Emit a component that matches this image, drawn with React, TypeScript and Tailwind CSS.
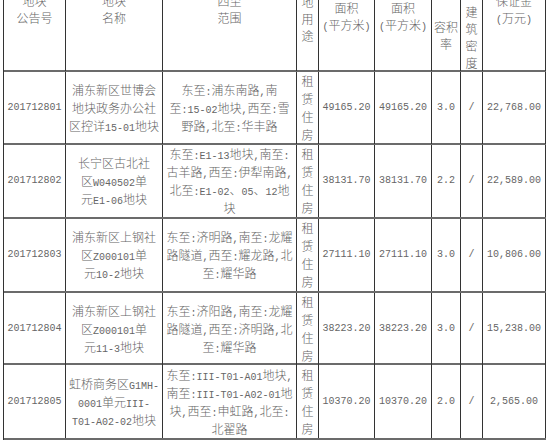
import React from "react";

const MONO = "font-['Liberation_Mono','Noto_Sans_CJK_SC',monospace] text-[10px] leading-none";

function T({ s }: { s: string }) {
  const parts = s.split(/([\x20-\x7E]+)/).filter((p) => p.length > 0);
  return (
    <>
      {parts.map((p, i) =>
        /^[\x20-\x7E]+$/.test(p) ? (
          <span key={i} className={MONO}>
            {p}
          </span>
        ) : (
          <span key={i}>{p}</span>
        )
      )}
    </>
  );
}

const COLS =
  "grid grid-cols-[62px_97px_134px_22px_56px_57px_29px_22px_63px]";

type Row = {
  id: string;
  name: string[];
  range: string[];
  a1: string;
  a2: string;
  far: string;
  fee: string;
  h: string;
};

const rows: Row[] = [
  {
    id: "201712801",
    name: ["浦东新区世博会", "地块政务办公社", "区控详15-01地块"],
    range: ["东至:浦东南路,南", "至:15-02地块,西至:雪", "野路,北至:华丰路"],
    a1: "49165.20",
    a2: "49165.20",
    far: "3.0",
    fee: "22,768.00",
    h: "h-[73px]",
  },
  {
    id: "201712802",
    name: ["长宁区古北社", "区W040502单", "元E1-06地块"],
    range: ["东至:E1-13地块,南至:", "古羊路,西至:伊犁南路,", "北至:E1-02、05、12地", "块"],
    a1: "38131.70",
    a2: "38131.70",
    far: "2.2",
    fee: "22,589.00",
    h: "h-[74px]",
  },
  {
    id: "201712803",
    name: ["浦东新区上钢社", "区Z000101单", "元10-2地块"],
    range: ["东至:济明路,南至:龙耀", "路隧道,西至:耀龙路,北", "至:耀华路"],
    a1: "27111.10",
    a2: "27111.10",
    far: "3.0",
    fee: "10,806.00",
    h: "h-[74px]",
  },
  {
    id: "201712804",
    name: ["浦东新区上钢社", "区Z000101单", "元11-3地块"],
    range: ["东至:济阳路,南至:龙耀", "路隧道,西至:济明路,北", "至:耀华路"],
    a1: "38223.20",
    a2: "38223.20",
    far: "3.0",
    fee: "15,238.00",
    h: "h-[72px]",
  },
  {
    id: "201712805",
    name: ["虹桥商务区G1MH-", "0001单元III-", "T01-A02-02地块"],
    range: ["东至:III-T01-A01地块,", "南至:III-T01-A02-01地", "块,西至:申虹路,北至:", "北翟路"],
    a1: "10370.20",
    a2: "10370.20",
    far: "2.0",
    fee: "2,565.00",
    h: "h-[75px]",
  },
];

const cellBase =
  "flex flex-col items-center justify-center border-r border-[#333] text-center whitespace-nowrap leading-[18px]";

function Lines({ lines }: { lines: string[] }) {
  return (
    <>
      {lines.map((l, i) => (
        <div key={i}>
          <T s={l} />
        </div>
      ))}
    </>
  );
}

type H = { lines: string[]; mt: string };

const header: H[] = [
  { lines: ["地块", "公告号"], mt: "mt-[-8px]" },
  { lines: ["地块", "名称"], mt: "mt-[-8px]" },
  { lines: ["四至", "范围"], mt: "mt-[-8px]" },
  { lines: ["土", "地", "用", "途"], mt: "mt-[-24px]" },
  { lines: ["出让", "面积", "(平方米)"], mt: "mt-[-18px]" },
  { lines: ["建筑", "面积", "(平方米)"], mt: "mt-[-18px]" },
  { lines: ["容积", "率"], mt: "mt-[18px]" },
  { lines: ["建", "筑", "密", "度"], mt: "mt-[3px]" },
  { lines: ["保证金", "(万元)"], mt: "mt-[-8px]" },
];

export default function App() {
  return (
    <div className="w-[550px] h-[442px] overflow-hidden bg-white text-[#666] text-[12px] font-light font-['Noto_Sans_CJK_SC',sans-serif]">
      <div className="ml-[3px] w-[543px] border-l border-[#333]">
        <div className={`${COLS} h-[72px] border-b-2 border-b-[#6b6b6b]`}>
          {header.map((c, i) => (
            <div
              key={i}
              className="flex flex-col items-center justify-start border-r border-[#333] text-center whitespace-nowrap leading-[17px]"
            >
              <div className={c.mt}>
                <Lines lines={c.lines} />
              </div>
            </div>
          ))}
        </div>
        {rows.map((r) => (
          <div
            key={r.id}
            className={`${COLS} ${r.h} border-b-2 border-b-[#6b6b6b]`}
          >
            <div className={cellBase}>
              <T s={r.id} />
            </div>
            <div className={cellBase}>
              <Lines lines={r.name} />
            </div>
            <div className={cellBase}>
              <Lines lines={r.range} />
            </div>
            <div className={cellBase}>
              <Lines lines={["租", "赁", "住", "房"]} />
            </div>
            <div className={cellBase}>
              <T s={r.a1} />
            </div>
            <div className={cellBase}>
              <T s={r.a2} />
            </div>
            <div className={cellBase}>
              <T s={r.far} />
            </div>
            <div className={cellBase}>
              <T s="/" />
            </div>
            <div className={cellBase}>
              <T s={r.fee} />
            </div>
          </div>
        ))}
      </div>
    </div>
  );
}
